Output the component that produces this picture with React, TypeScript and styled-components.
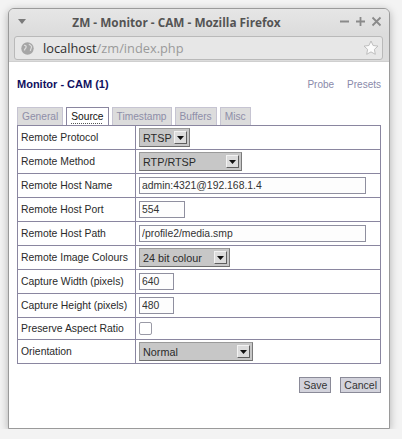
import React from 'react';
import styled, { createGlobalStyle } from 'styled-components';

const GlobalStyle = createGlobalStyle`
  html, body {
    margin: 0;
    padding: 0;
    background: #f3f3f3;
  }
`;

const Window = styled.div`
  margin: 8px 0 0 8px;
  width: 382px;
  height: 421px;
  box-sizing: border-box;
  border: 1px solid #9a9a9a;
  border-radius: 6px 6px 0 0;
  box-shadow: 0 2px 9px rgba(0, 0, 0, 0.28);
  display: flex;
  flex-direction: column;
  overflow: hidden;
  background: #dedede;
`;

const TitleBar = styled.div`
  height: 25px;
  display: flex;
  align-items: center;
  padding: 0 7px 0 9px;
  background: linear-gradient(#e6e6e6, #dcdcdc);
  font-family: 'Open Sans', 'DejaVu Sans', sans-serif;
`;

const TitleText = styled.div`
  flex: 1;
  text-align: center;
  font-weight: bold;
  font-size: 11.8px;
  color: #545454;
  padding-right: 12px;
`;

const WinButtons = styled.div`
  display: flex;
  gap: 5px;
  align-items: center;
`;

const NavBar = styled.div`
  height: 28px;
  padding: 2px 6px 0 5px;
  box-sizing: border-box;
  background: #dcdcdc;
  border-bottom: 1px solid #cfcfcf;
`;

const UrlField = styled.div`
  height: 24px;
  box-sizing: border-box;
  border: 1px solid #b9b9b9;
  border-radius: 3px;
  background: #e7e7e7;
  display: flex;
  align-items: center;
  padding: 0 3px 0 5px;
  font-family: 'Open Sans', 'DejaVu Sans', sans-serif;
  font-size: 12.8px;
`;

const Host = styled.span`
  color: #2e2e2e;
`;

const Path = styled.span`
  color: #9a9a9a;
  flex: 1;
`;

const Content = styled.div`
  flex: 1;
  background: #fff;
  padding: 15px 8px 0 8px;
  font-family: 'Liberation Sans', Arial, sans-serif;
  font-size: 10.4px;
  color: #2a2a2a;
`;

const Header = styled.div`
  display: flex;
  align-items: center;
  height: 14px;
  font-size: 10px;
`;

const PageTitle = styled.div`
  flex: 1;
  font-weight: bold;
  font-size: 11px;
  color: #101060;
`;

const HeaderLink = styled.a`
  color: #8a8aaa;
  text-decoration: none;
  margin-left: 13px;
`;

const Tabs = styled.div`
  display: flex;
  gap: 3px;
  margin-top: 15px;
  height: 19px;
  align-items: flex-end;
  font-size: 10.2px;
`;

const Tab = styled.div<{ $active?: boolean }>`
  height: 18px;
  box-sizing: border-box;
  padding: 0 4px;
  display: flex;
  align-items: center;
  border: 1px solid ${(p) => (p.$active ? '#8a86a0' : '#c6c4d2')};
  border-bottom: none;
  background: ${(p) => (p.$active ? '#fff' : '#dcdcdc')};
  color: ${(p) => (p.$active ? '#111' : '#8e8ea8')};
  ${(p) => (p.$active ? 'text-decoration: underline dotted #555; text-underline-offset: 3px;' : '')}
`;

const Table = styled.table`
  width: 100%;
  border-collapse: collapse;
  border: 1px solid #8a86a0;
`;

const Row = styled.tr<{ $h?: number }>`
  height: ${(p) => p.$h ?? 24}px;
`;

const Label = styled.td`
  width: 111px;
  border: 1px solid #8a86a0;
  padding: 0 3px;
  white-space: nowrap;
`;

const Field = styled.td`
  border: 1px solid #8a86a0;
  padding: 0 3px;
`;

const TextInput = styled.input<{ $w: number }>`
  width: ${(p) => p.$w}px;
  height: 17px;
  box-sizing: border-box;
  border: 1px solid #8f8f9f;
  padding: 0 2px;
  margin: 0;
  font-family: 'Liberation Sans', Arial, sans-serif;
  font-size: 10.4px;
  color: #333;
  background: #fdfdfd;
  display: block;
`;

const SelectBox = styled.div<{ $w: number }>`
  width: ${(p) => p.$w}px;
  height: 19px;
  box-sizing: border-box;
  display: flex;
  align-items: center;
  background: #c7c7c7;
  border: 1px solid;
  border-color: #9a9a9a #7a7a7a #6e6e6e #9a9a9a;
  color: #2a2a2a;
  padding-left: 3px;
  font-size: 10.8px;
`;

const SelectText = styled.span`
  flex: 1;
`;

const ArrowBox = styled.span`
  width: 13px;
  height: 13px;
  margin-right: 2px;
  box-sizing: border-box;
  background: #dcdcdc;
  border: 1px solid;
  border-color: #f2f2f2 #5e5e5e #5e5e5e #f2f2f2;
  display: flex;
  align-items: center;
  justify-content: center;
`;

const Check = styled.span`
  display: block;
  width: 13px;
  height: 13px;
  box-sizing: border-box;
  border: 1px solid #9a9aa6;
  border-radius: 2px;
  background: #fff;
`;

const Actions = styled.div`
  display: flex;
  justify-content: flex-end;
  gap: 9px;
  margin-top: 13px;
`;

const Button = styled.button`
  height: 16px;
  box-sizing: border-box;
  padding: 0 3px;
  margin: 0;
  border: 1px solid #8a8a98;
  background: #d3d3dc;
  font-family: 'Liberation Sans', Arial, sans-serif;
  font-size: 10.5px;
  color: #333;
  line-height: 14px;
`;

const Arrow = () => (
  <svg width="7" height="4" viewBox="0 0 7 4">
    <path d="M0 0h7L3.5 4z" fill="#111" />
  </svg>
);

const Select = ({ w, value }: { w: number; value: string }) => (
  <SelectBox $w={w}>
    <SelectText>{value}</SelectText>
    <ArrowBox>
      <Arrow />
    </ArrowBox>
  </SelectBox>
);

const Globe = () => (
  <svg width="13" height="13" viewBox="0 0 13 13" style={{ marginRight: 9, marginLeft: 1 }}>
    <circle cx="6.5" cy="6.5" r="6.2" fill="#a6a6a6" />
    <path d="M3 3.5c1.5-.5 2.5.5 2 2s-1.8 1.2-1.5 3M8 2c.5 1 2 1 2.5 2.5S9 7 9.5 9" stroke="#dadada" strokeWidth="1.3" fill="none" />
  </svg>
);

const Star = () => (
  <svg width="16" height="16" viewBox="0 0 16 16">
    <path
      d="M8 1l2.1 4.5 4.9.6-3.6 3.3.9 4.9L8 11.9l-4.3 2.4.9-4.9L1 6.1l4.9-.6z"
      fill="#fbfbfb"
      stroke="#b8b8b8"
      strokeWidth="0.9"
      strokeLinejoin="round"
    />
  </svg>
);

const rows: { label: string; el: React.ReactNode; h?: number }[] = [
  { label: 'Remote Protocol', el: <Select w={51} value="RTSP" /> },
  { label: 'Remote Method', el: <Select w={103} value="RTP/RTSP" /> },
  { label: 'Remote Host Name', el: <TextInput $w={227} defaultValue="admin:4321@192.168.1.4" /> },
  { label: 'Remote Host Port', el: <TextInput $w={46} defaultValue="554" /> },
  { label: 'Remote Host Path', el: <TextInput $w={227} defaultValue="/profile2/media.smp" /> },
  { label: 'Remote Image Colours', el: <Select w={91} value="24 bit colour" /> },
  { label: 'Capture Width (pixels)', el: <TextInput $w={35} defaultValue="640" /> },
  { label: 'Capture Height (pixels)', el: <TextInput $w={35} defaultValue="480" /> },
  { label: 'Preserve Aspect Ratio', el: <Check />, h: 22 },
  { label: 'Orientation', el: <Select w={114} value="Normal" /> },
];

export default function App() {
  return (
    <>
      <GlobalStyle />
      <Window>
        <TitleBar>
          <svg width="8" height="5" viewBox="0 0 8 5">
            <path d="M0 0h8L4 5z" fill="#7a7a7a" />
          </svg>
          <TitleText>ZM - Monitor - CAM - Mozilla Firefox</TitleText>
          <WinButtons>
            <svg width="11" height="11" viewBox="0 0 11 11">
              <path d="M1 5.5h9" stroke="#8a8a8a" strokeWidth="1.8" />
            </svg>
            <svg width="11" height="11" viewBox="0 0 11 11">
              <path d="M1 5.5h9M5.5 1v9" stroke="#8a8a8a" strokeWidth="1.8" />
            </svg>
            <svg width="11" height="11" viewBox="0 0 11 11">
              <path d="M1.5 1.5l8 8M9.5 1.5l-8 8" stroke="#8a8a8a" strokeWidth="1.8" />
            </svg>
          </WinButtons>
        </TitleBar>
        <NavBar>
          <UrlField>
            <Globe />
            <Host>localhost</Host>
            <Path>/zm/index.php</Path>
            <Star />
          </UrlField>
        </NavBar>
        <Content>
          <Header>
            <PageTitle>Monitor - CAM (1)</PageTitle>
            <HeaderLink>Probe</HeaderLink>
            <HeaderLink>Presets</HeaderLink>
          </Header>
          <Tabs>
            <Tab>General</Tab>
            <Tab $active>Source</Tab>
            <Tab>Timestamp</Tab>
            <Tab>Buffers</Tab>
            <Tab>Misc</Tab>
          </Tabs>
          <Table>
            <tbody>
              {rows.map((r) => (
                <Row key={r.label} $h={r.h}>
                  <Label>{r.label}</Label>
                  <Field>{r.el}</Field>
                </Row>
              ))}
            </tbody>
          </Table>
          <Actions>
            <Button>Save</Button>
            <Button>Cancel</Button>
          </Actions>
        </Content>
      </Window>
    </>
  );
}
